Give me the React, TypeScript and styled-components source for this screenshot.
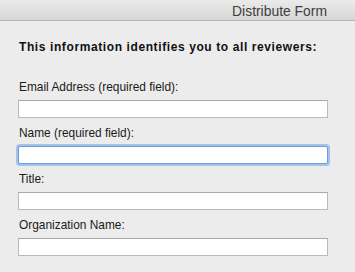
import React from "react";
import styled, { createGlobalStyle } from "styled-components";

const Global = createGlobalStyle`
  html, body { margin: 0; padding: 0; background: #ececec; }
  body { font-family: "Liberation Sans", Arial, sans-serif; }
`;

const Window = styled.div`
  width: 355px;
  height: 272px;
  background: #ececec;
  display: flex;
  flex-direction: column;
  overflow: hidden;
`;

const TitleBar = styled.div`
  height: 20px;
  border-bottom: 1px solid #b4b4b4;
  background: linear-gradient(#ebebeb, #d6d6d6);
  display: flex;
  align-items: center;
  justify-content: flex-end;
  padding-right: 28px;
`;

const Title = styled.span`
  font-size: 13.9px;
  color: #3e3e3e;
  line-height: 16px;
  padding-top: 1px;
`;

const Content = styled.div`
  padding: 20px 0 0 18px;
  display: flex;
  flex-direction: column;
`;

const Intro = styled.div`
  font-size: 12px;
  letter-spacing: 0.6px;
  font-weight: bold;
  line-height: 13px;
  color: #111;
  padding-left: 1px;
  margin-bottom: 26px;
`;

const Fields = styled.div`
  display: flex;
  flex-direction: column;
  gap: 8px;
`;

const Field = styled.label`
  display: flex;
  flex-direction: column;
  gap: 6px;
`;

const Label = styled.span`
  font-size: 11.9px;
  line-height: 14px;
  color: #1a1a1a;
  padding-left: 1px;
`;

const Input = styled.input<{ $focused?: boolean }>`
  box-sizing: border-box;
  width: 310px;
  height: 18px;
  margin: 0;
  padding: 0 3px;
  background: #fff;
  border: 1px solid ${(p) => (p.$focused ? "#6c9bd6" : "#b9b9b9")};
  border-top-color: ${(p) => (p.$focused ? "#6c9bd6" : "#a9a9a9")};
  border-radius: ${(p) => (p.$focused ? "2px" : "0")};
  box-shadow: ${(p) => (p.$focused ? "0 0 0 2px #a3c2ec" : "none")};
  outline: none;
  font-family: "Liberation Sans", Arial, sans-serif;
  font-size: 12px;
`;

const fields = [
  { label: "Email Address (required field):" },
  { label: "Name (required field):", focused: true },
  { label: "Title:" },
  { label: "Organization Name:" },
];

export default function App() {
  return (
    <Window>
      <Global />
      <TitleBar>
        <Title>Distribute Form</Title>
      </TitleBar>
      <Content>
        <Intro>This information identifies you to all reviewers:</Intro>
        <Fields>
          {fields.map((f) => (
            <Field key={f.label}>
              <Label>{f.label}</Label>
              <Input $focused={f.focused} readOnly />
            </Field>
          ))}
        </Fields>
      </Content>
    </Window>
  );
}
